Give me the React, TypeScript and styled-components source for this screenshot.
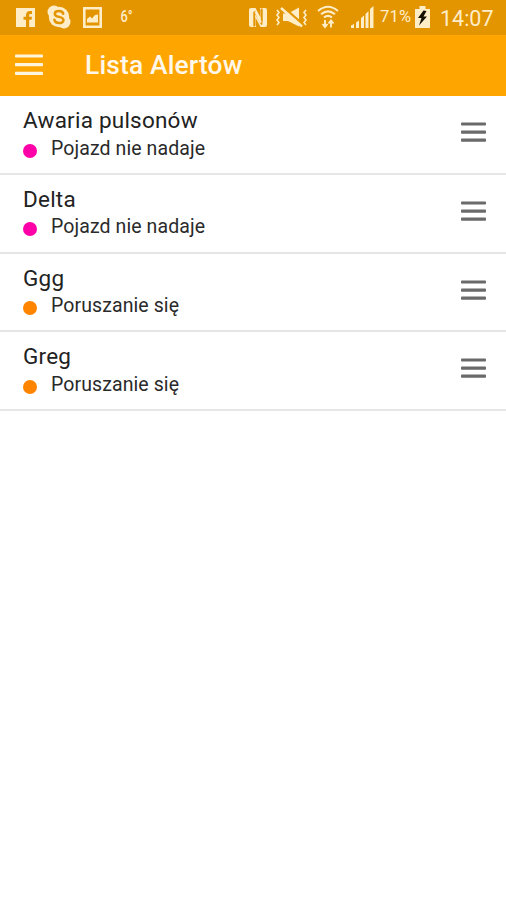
import React from 'react';
import styled, { createGlobalStyle } from 'styled-components';

const GlobalStyle = createGlobalStyle`
  * { box-sizing: border-box; }
  body { margin: 0; background: #fff; font-family: Roboto, sans-serif; }
`;

const Screen = styled.div`
  width: 506px;
  height: 900px;
  overflow: hidden;
  background: #fff;
`;

const StatusBar = styled.div`
  display: flex;
  align-items: center;
  justify-content: space-between;
  height: 35px;
  padding: 0 12px 1px 16px;
  background: #e39500;
  color: #ffedc8;
`;

const StatusGroup = styled.div`
  display: flex;
  align-items: center;
  height: 34px;
`;

const StatusIcon = styled.svg<{ $after?: number }>`
  display: block;
  flex: none;
  margin-right: ${({ $after }) => $after ?? 0}px;
`;

const Temperature = styled.span`
  margin-left: 5px;
  font-size: 16px;
  line-height: 20px;
  font-weight: 500;
  transform: scaleX(0.8);
`;

const Percent = styled.span`
  width: 35px;
  font-size: 16.5px;
  line-height: 20px;
  letter-spacing: 0.2px;
  white-space: nowrap;
`;

const Clock = styled.span`
  width: 54px;
  margin-left: 10px;
  font-size: 21.5px;
  line-height: 33px;
  padding-top: 2px;
  white-space: nowrap;
`;

const AppBar = styled.header`
  display: flex;
  align-items: center;
  height: 61px;
  padding: 0 0 2px 15px;
  background: #ffa500;
`;

const IconButton = styled.button<{ $color: string }>`
  display: block;
  flex: none;
  padding: 0;
  border: 0;
  background: none;
  color: ${({ $color }) => $color};
`;

const LinesIcon = styled.svg`
  display: block;
`;

const Title = styled.h1`
  margin: 0 0 0 42px;
  color: #fff8ea;
  font-size: 26.4px;
  line-height: 30px;
  font-weight: 500;
  letter-spacing: 0.15px;
`;

const List = styled.ul`
  margin: 0;
  padding: 0;
  list-style: none;
`;

const Row = styled.li`
  display: flex;
  align-items: flex-start;
  justify-content: space-between;
  height: 78.75px;
  padding: 11px 20px 0 23px;
  border-bottom: 2px solid #e6e6e6;
`;

const Name = styled.div`
  color: #222;
  font-size: 22.5px;
  line-height: 27.5px;
  letter-spacing: 0.22px;
`;

const Detail = styled.div`
  display: flex;
  align-items: center;
  color: #2a2a2a;
  font-size: 19.5px;
  line-height: 28px;
  letter-spacing: 0.09px;
`;

const Dot = styled.i<{ $color: string }>`
  width: 14px;
  height: 14px;
  margin: 4px 14px 0 0;
  border-radius: 50%;
  background: ${({ $color }) => $color};
`;

const HandleSlot = styled.div`
  padding-top: 15px;
`;

const alerts = [
  { name: 'Awaria pulsonów', detail: 'Pojazd nie nadaje', color: '#ff00a8' },
  { name: 'Delta', detail: 'Pojazd nie nadaje', color: '#ff00a8' },
  { name: 'Ggg', detail: 'Poruszanie się', color: '#ff8400' },
  { name: 'Greg', detail: 'Poruszanie się', color: '#ff8400' },
];

const bar = '#e39500';

function Lines({ width, step, color, label }: { width: number; step: number; color: string; label: string }) {
  const height = step * 2 + 4;
  return (
    <IconButton $color={color} aria-label={label}>
      <LinesIcon width={width} height={height} viewBox={`0 0 ${width} ${height}`}>
        {[0, 1, 2].map((i) => (
          <rect key={i} x="0" y={0.4 + i * step} width={width} height="3.2" rx="0.8" fill="currentColor" />
        ))}
      </LinesIcon>
    </IconButton>
  );
}

function Notifications() {
  return (
    <StatusGroup>
      <StatusIcon $after={12} width="19" height="19" viewBox="0 0 19 19">
        <path d="M0 0H19V19H0Z" fill="currentColor" />
        <path d="M10 19V11.8H7.5V8.8H10V7C10 4.3 11.6 3 14 3H16V6H14.6C13.6 6 13.2 6.4 13.2 7.3V8.8H16L15.5 11.8H13.2V19Z" fill={bar} />
      </StatusIcon>
      <StatusIcon $after={12} width="24" height="24" viewBox="0 0 24 24">
        <circle cx="12" cy="12" r="10.2" fill="currentColor" />
        <circle cx="7" cy="7" r="6.5" fill="currentColor" />
        <circle cx="17" cy="17" r="6.5" fill="currentColor" />
        <path d="M16.2 8.8C15.5 5.2 7.8 5.1 7.8 9C7.8 12.9 16.5 10.9 16.5 15C16.5 19.2 8 19 7.4 14.8" fill="none" stroke={bar} strokeWidth="2.5" strokeLinecap="round" />
      </StatusIcon>
      <StatusIcon $after={12} width="19" height="21" viewBox="0 0 19 21">
        <path d="M1.3 1.3H17.7V19.7H1.3Z" fill="none" stroke="currentColor" strokeWidth="2.6" />
        <path d="M4 15.5V12L7 9.5L9 11.5L12 8L15 7.5V15.5Z" fill="currentColor" />
      </StatusIcon>
      <Temperature>6°</Temperature>
    </StatusGroup>
  );
}

function SystemStatus() {
  return (
    <StatusGroup>
      <StatusIcon $after={8} width="18" height="19" viewBox="0 0 18 19">
        <path d="M0 2Q0 0 2 0H6.5L11.5 9.5V2L10.8 0H16Q18 0 18 2V17Q18 19 16 19H11.5L6.5 9.5V17L7.2 19H2Q0 19 0 17Z" fill="currentColor" />
        <path d="M5.2 18.5V4.5L6 4L13 16.5M12.8 0.5V14.5" fill="none" stroke={bar} strokeWidth="1.8" />
        <path d="M6.5 3.5L11.8 14.5" stroke="currentColor" strokeWidth="2.2" />
      </StatusIcon>
      <StatusIcon $after={9} width="33" height="22" viewBox="0 0 33 22">
        <path d="M2 4L4 6.5L2 9L4 11.5L2 14L4 16.5L2 19M31 4L29 6.5L31 9L29 11.5L31 14L29 16.5L31 19" fill="none" stroke="currentColor" strokeWidth="1.6" />
        <path d="M8 7.5H13L24 1.5V20.5L13 15H8Z" fill="currentColor" />
        <path d="M8 1L28 18.5" stroke={bar} strokeWidth="2.4" />
        <path d="M6 2L27 20.5" stroke="currentColor" strokeWidth="2.4" />
      </StatusIcon>
      <StatusIcon $after={12} width="22" height="24" viewBox="0 0 22 24">
        <path d="M1 6Q11-2.5 21 6M4 9.3Q11 3.5 18 9.3M7 12.5Q11 9.2 15 12.5" fill="none" stroke="currentColor" strokeWidth="2" />
        <path d="M8 15V21.5M5.5 19L8 22L10.5 19M14 22.5V16M11.5 18.5L14 15.5L16.5 18.5" fill="none" stroke="currentColor" strokeWidth="1.9" />
      </StatusIcon>
      <StatusIcon $after={6} width="23" height="22" viewBox="0 0 23 22">
        <path d="M0 22V19.5L3 18V22ZM5 22V16.5L8 14.5V22ZM10 22V12L13 9.5V22ZM14.5 22V8L17.5 5V22ZM19 22V3L22.5 0V22Z" fill="currentColor" />
      </StatusIcon>
      <Percent>71%</Percent>
      <StatusIcon width="15" height="22" viewBox="0 0 15 22">
        <path d="M0 3H4.5V0H10.5V3H15V22H0Z" fill="currentColor" />
        <path d="M8.5 4.5L3 12H6.5L4 19.5L12 10.5H8.5L11.5 5Z" fill="#151000" />
      </StatusIcon>
      <Clock>14:07</Clock>
    </StatusGroup>
  );
}

export default function App() {
  return (
    <Screen>
      <GlobalStyle />
      <StatusBar>
        <Notifications />
        <SystemStatus />
      </StatusBar>
      <AppBar>
        <Lines width={28} step={8.7} color="#fff5df" label="Menu" />
        <Title>Lista Alertów</Title>
      </AppBar>
      <List>
        {alerts.map((alert) => (
          <Row key={alert.name}>
            <div>
              <Name>{alert.name}</Name>
              <Detail><Dot $color={alert.color} />{alert.detail}</Detail>
            </div>
            <HandleSlot>
              <Lines width={25} step={8.1} color="#6a6a6a" label="Przesuń" />
            </HandleSlot>
          </Row>
        ))}
      </List>
    </Screen>
  );
}
